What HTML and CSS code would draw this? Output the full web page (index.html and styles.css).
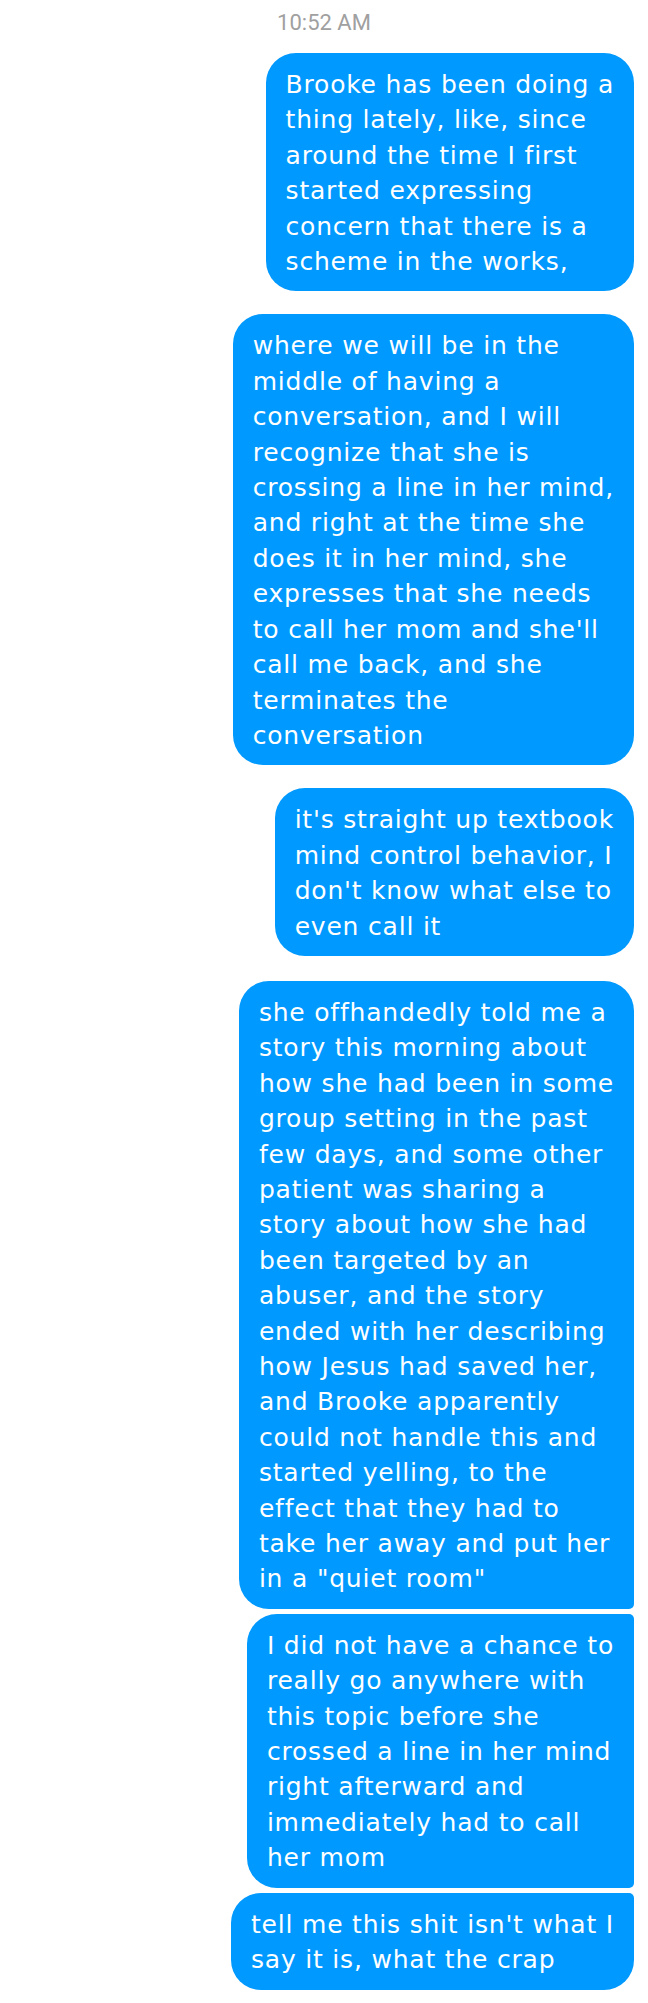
FILE: index.html
```html
<!DOCTYPE html>
<html>
<head>
<meta charset="utf-8">
<link rel="stylesheet" href="styles.css">
</head>
<body>
<div class="thread">
  <div class="time">10:52 AM</div>
  <div class="msg first">
    <div class="bubble">Brooke has been doing a<br>thing lately, like, since<br>around the time I first<br>started expressing<br>concern that there is a<br>scheme in the works,</div>
  </div>
  <div class="msg">
    <div class="bubble">where we will be in the<br>middle of having a<br>conversation, and I will<br>recognize that she is<br>crossing a line in her mind,<br>and right at the time she<br>does it in her mind, she<br>expresses that she needs<br>to call her mom and she'll<br>call me back, and she<br>terminates the<br>conversation</div>
  </div>
  <div class="msg">
    <div class="bubble">it's straight up textbook<br>mind control behavior, I<br>don't know what else to<br>even call it</div>
  </div>
  <div class="msg group">
    <div class="bubble g-first">she offhandedly told me a<br>story this morning about<br>how she had been in some<br>group setting in the past<br>few days, and some other<br>patient was sharing a<br>story about how she had<br>been targeted by an<br>abuser, and the story<br>ended with her describing<br>how Jesus had saved her,<br>and Brooke apparently<br>could not handle this and<br>started yelling, to the<br>effect that they had to<br>take her away and put her<br>in a "quiet room"</div>
    <div class="bubble g-mid">I did not have a chance to<br>really go anywhere with<br>this topic before she<br>crossed a line in her mind<br>right afterward and<br>immediately had to call<br>her mom</div>
    <div class="bubble g-last">tell me this shit isn't what I<br>say it is, what the crap</div>
  </div>
</div>
</body>
</html>
```

FILE: styles.css
```css
html, body {
  margin: 0;
  padding: 0;
  background: #ffffff;
}

.thread {
  width: 648px;
  padding: 11px 14px 0 0;
  box-sizing: border-box;
  display: flex;
  flex-direction: column;
  font-family: Roboto, "Liberation Sans", sans-serif;
}

.time {
  font-size: 22px;
  line-height: 24px;
  color: #a0a0a0;
  text-align: center;
  padding-left: 14px;
  margin-bottom: 18px;
}

.msg {
  display: flex;
  flex-direction: column;
  align-items: flex-end;
  gap: 5px;
  margin-top: 23px;
}

.msg.first {
  margin-top: 0;
}

.msg.group {
  margin-top: 25px;
}

.bubble {
  background: #0099ff;
  color: #ffffff;
  font-family: "DejaVu Sans", Roboto, sans-serif;
  font-size: 25px;
  letter-spacing: 0.8px;
  line-height: 35.4px;
  padding: 14px 20px 12px 20px;
  border-radius: 30px;
  white-space: nowrap;
}

.g-first {
  border-bottom-right-radius: 5px;
}

.g-mid {
  border-top-right-radius: 5px;
  border-bottom-right-radius: 5px;
}

.g-last {
  border-top-right-radius: 5px;
}
```
